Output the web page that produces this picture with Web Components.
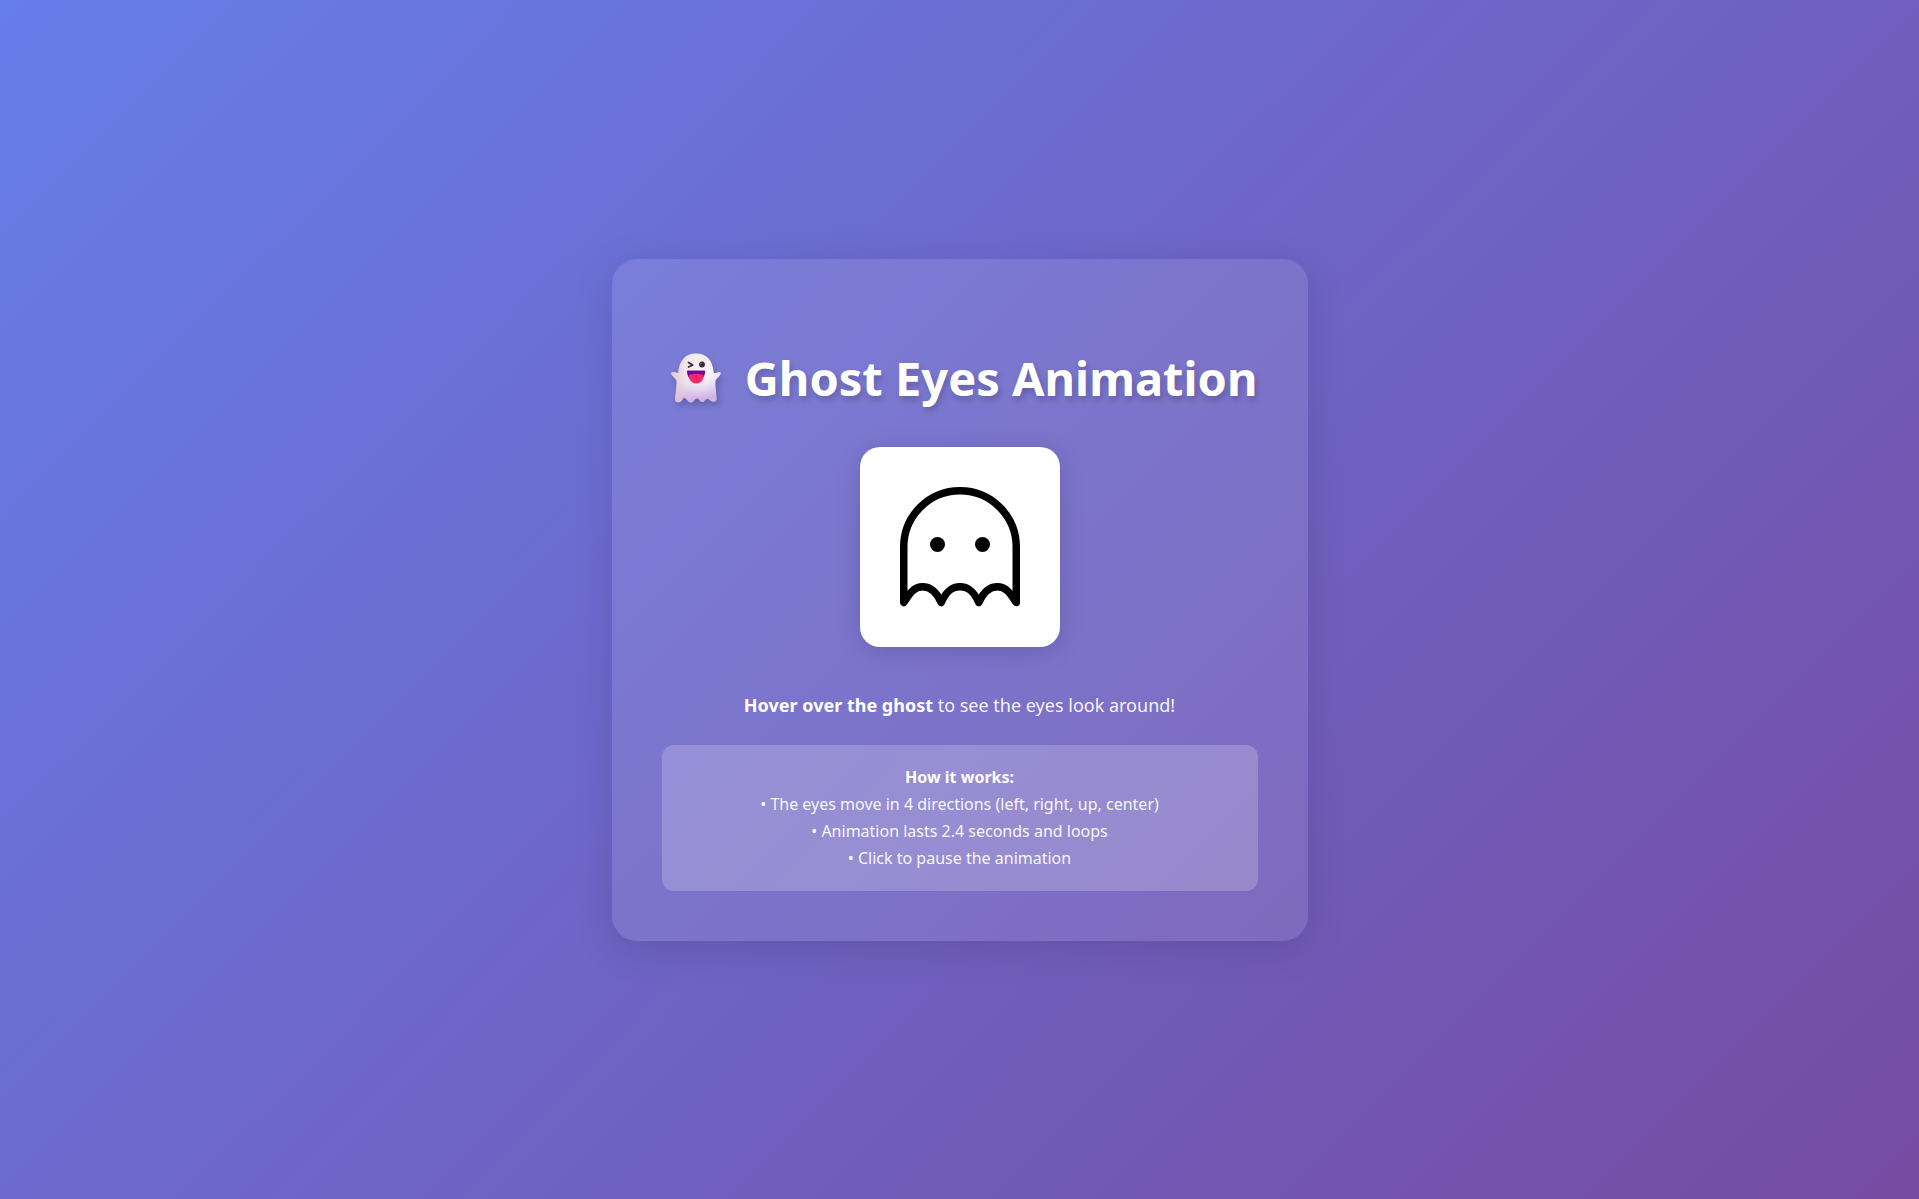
<!DOCTYPE html>
<html lang="en">
<head>
<meta charset="utf-8">
<meta name="viewport" content="width=device-width, initial-scale=1">
<title>Ghost Eyes Animation</title>
<style>
body { margin: 0; font-family: "Segoe UI", "Noto Sans", "Open Sans", sans-serif; color: #fff; }
</style>
</head>
<body>
<ghost-page>
  <demo-card>
    <ghost-title slot="title">Ghost Eyes Animation</ghost-title>
    <ghost-stage></ghost-stage>
    <hover-hint><strong>Hover over the ghost</strong> to see the eyes look around!</hover-hint>
    <info-box heading="How it works:">
      <info-line>The eyes move in 4 directions (left, right, up, center)</info-line>
      <info-line>Animation lasts 2.4 seconds and loops</info-line>
      <info-line>Click to pause the animation</info-line>
    </info-box>
  </demo-card>
</ghost-page>
<script>
const define = (name, html, setup) => {
  const template = document.createElement('template');
  template.innerHTML = html;
  customElements.define(name, class extends HTMLElement {
    constructor() {
      super();
      this.attachShadow({ mode: 'open' }).append(template.content.cloneNode(true));
    }
    connectedCallback() { if (setup) setup(this, this.shadowRoot); }
  });
};

define('ghost-page', `
<style>
:host { display: block; }
main { min-height: 100vh; box-sizing: border-box; padding: 20px; display: flex; align-items: center; justify-content: center;
  background: linear-gradient(135deg, #667eea 0%, #764ba2 100%); }
</style>
<main><slot></slot></main>`);

define('demo-card', `
<style>
:host { display: block; width: 100%; max-width: 696px; box-sizing: border-box; padding: 85px 50px 50px;
  border-radius: 25px; background: rgba(255,255,255,.1); box-shadow: 0 8px 40px rgba(0,0,0,.12); text-align: center; }
</style>
<slot name="title"></slot><slot></slot>`);

define('ghost-title', `
<style>
:host { display: block; margin-bottom: 35px; }
h1 { margin: 0; display: flex; align-items: center; justify-content: flex-end; gap: 24px;
  font-size: 47px; line-height: 68px; font-weight: 700; text-shadow: 2px 4px 6px rgba(0,0,0,.2); }
svg { flex: none; width: 50px; height: 50px; filter: drop-shadow(2px 4px 3px rgba(0,0,0,.2)); }
</style>
<h1>
<svg viewBox="0 0 50 50" role="img" aria-label="Ghost">
  <defs>
    <linearGradient id="body" x1="0" y1="0" x2="0.25" y2="1">
      <stop offset="0" stop-color="#f1ebe8"/><stop offset=".6" stop-color="#ebe4ef"/><stop offset="1" stop-color="#d3b2e4"/>
    </linearGradient>
    <radialGradient id="glow" cx=".65" cy=".42" r=".5">
      <stop offset="0" stop-color="#fff" stop-opacity=".7"/><stop offset="1" stop-color="#fff" stop-opacity="0"/>
    </radialGradient>
    <linearGradient id="side" x1="0" y1="0" x2="1" y2="0">
      <stop offset="0" stop-color="#e2c3c5" stop-opacity=".8"/><stop offset=".35" stop-color="#e2c3c5" stop-opacity="0"/>
    </linearGradient>
    <path id="shape" d="M25 .5C14 .5 8 8 7.300 20C5 20 2.500 19 .8 19.500C-.3 20 .3 21.300 1.200 22.300C2.500 24 4.500 25.500 5.500 27.500C6 34 4.200 41 4.200 46.500C4.200 50 8.500 50 10.500 48C12 45.500 13 44.500 14.500 45.500C16.500 47 17.500 50 20.500 49.500C23 49 24 45.500 26 45.500C28 45.500 29 49.500 32 49C34 48.500 35.500 44.500 37.500 46C40 49.500 45.500 50 45.700 46C45.500 40 44 33 44.500 27.500C46 25.500 48 23.500 49.300 21.500C50.300 20 49.500 19 48 19.300C46 19.700 44.500 20.500 42.700 20C42 8 36 .5 25 .5Z"/>
  </defs>
  <use href="#shape" fill="url(#body)"/><use href="#shape" fill="url(#side)"/><use href="#shape" fill="url(#glow)"/>
  <path d="M17.500 9.500l4.200 2.500l-4.200 2" fill="none" stroke="#41243b" stroke-width="1.700" stroke-linecap="round" stroke-linejoin="round"/>
  <ellipse cx="31" cy="11.500" rx="2.900" ry="3" fill="#41243b"/><circle cx="30" cy="10.500" r=".7" fill="#9b8293"/>
  <path d="M17 17.500H33C34 17.500 34.300 18 34.200 19C33.500 25 30 28 25 28S16.500 25 16 19C15.900 18 16 17.500 17 17.500Z" fill="#7d0793"/>
  <path d="M18 22C21 20.500 29 20.500 32.300 22V24C32 28 29 30.500 25.300 30.500S18.500 28 18.100 24Z" fill="#fb2867"/>
  <path d="M25.200 22.500V26" stroke="#d91563" stroke-width="1" stroke-linecap="round"/>
</svg>
<span><slot></slot></span>
</h1>`);

define('ghost-stage', `
<style>
:host { display: flex; justify-content: center; margin-bottom: 44px; }
button { display: grid; place-items: center; width: 200px; height: 200px; padding: 0; border: 0; border-radius: 20px;
  background: #fff; cursor: pointer; box-shadow: 0 4px 24px rgba(0,0,0,.15); }
svg { display: block; width: 120px; height: 120px; }
@keyframes look { 0%, 100% { transform: none; } 20% { transform: translateX(-7px); } 45% { transform: translateX(7px); } 70% { transform: translateY(-7px); } }
button:hover .eyes { animation: look 2.4s ease-in-out infinite; }
button.paused .eyes { animation-play-state: paused; }
</style>
<button type="button" aria-label="Ghost, click to pause the animation">
<svg viewBox="0 0 120 120" aria-hidden="true">
  <path d="M3.750 115.500V60A56.250 56.250 0 0 1 116.250 60V115.500C110.500 107 106.500 99.750 97.500 99.750S83 106 78.750 115.500C74.500 106 69.500 99.750 60 99.750S45.500 106 41.250 115.500C37 106 31.500 99.750 22.500 99.750S9.500 107 3.750 115.500Z" fill="none" stroke="#000" stroke-width="7.500" stroke-linejoin="round"/>
  <g class="eyes"><circle cx="37.500" cy="57.500" r="7.500"/><circle cx="82.500" cy="57.500" r="7.500"/></g>
</svg>
</button>`, (el, root) => {
  const button = root.querySelector('button');
  button.onclick = () => button.classList.toggle('paused');
});

define('hover-hint', `
<style>
:host { display: block; margin-bottom: 26px; }
p { margin: 0; font-size: 18px; line-height: 28px; color: rgba(255,255,255,.95); }
::slotted(strong) { color: #fff; }
</style>
<p><slot></slot></p>`);

define('info-box', `
<style>
:host { display: block; padding: 19px; border-radius: 12px; background: rgba(255,255,255,.2); font-size: 16px; line-height: 27px; }
h2 { margin: 0; font-size: inherit; line-height: inherit; }
div { color: rgba(255,255,255,.95); }
</style>
<h2></h2><div role="list"><slot></slot></div>`, (el, root) => {
  root.querySelector('h2').textContent = el.getAttribute('heading');
});

define('info-line', `
<style>:host { display: block; }</style>
<div role="listitem">• <slot></slot></div>`);
</script>
</body>
</html>
